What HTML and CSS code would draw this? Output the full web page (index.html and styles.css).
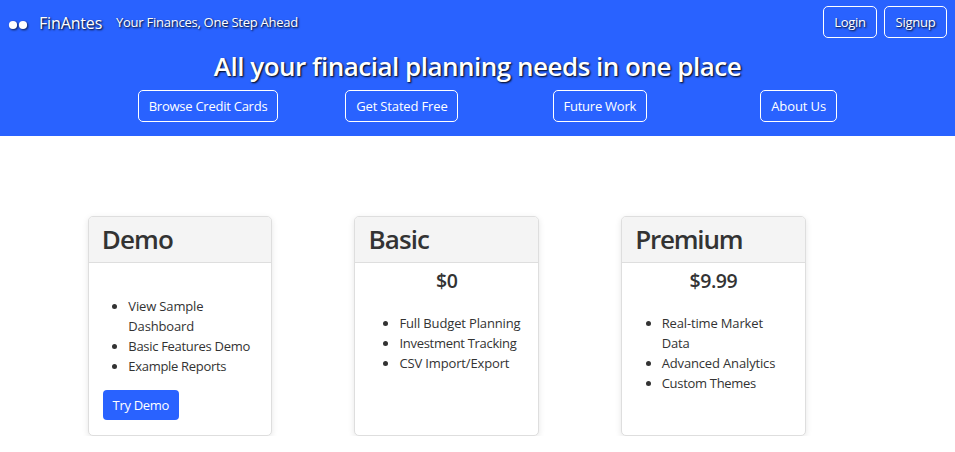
FILE: index.html
```html
<!DOCTYPE html>
<html lang="en">
<head>
<meta charset="utf-8">
<title>FinAntes</title>
<link rel="stylesheet" href="styles.css">
</head>
<body>
<header class="header">
  <nav class="nav">
    <svg class="logo" width="20" height="10" viewBox="0 0 20 10"><circle cx="5" cy="5" r="4.1" fill="#fff"/><circle cx="15" cy="5" r="4.1" fill="#fff"/></svg>
    <span class="brand">FinAntes</span>
    <span class="tagline">Your Finances, One Step Ahead</span>
    <div class="account">
      <a class="btn login">Login</a>
      <a class="btn signup">Signup</a>
    </div>
  </nav>
  <h1 class="headline">All your finacial planning needs in one place</h1>
  <div class="links">
    <div><a class="btn browse">Browse Credit Cards</a></div>
    <div><a class="btn started">Get Stated Free</a></div>
    <div><a class="btn future">Future Work</a></div>
    <div><a class="btn about">About Us</a></div>
  </div>
</header>
<main class="plans">
  <section class="card">
    <h2 class="card-title">Demo</h2>
    <div class="card-body first">
      <ul class="features">
        <li>View Sample<br>Dashboard</li>
        <li class="tight">Basic Features Demo</li>
        <li class="tight">Example Reports</li>
      </ul>
      <a class="try">Try Demo</a>
    </div>
  </section>
  <section class="card">
    <h2 class="card-title">Basic</h2>
    <div class="card-body">
      <h3 class="price">$0</h3>
      <ul class="features basic">
        <li>Full Budget Planning</li>
        <li class="tight">Investment Tracking</li>
        <li>CSV Import/Export</li>
      </ul>
    </div>
  </section>
  <section class="card">
    <h2 class="card-title premium">Premium</h2>
    <div class="card-body">
      <h3 class="price">$9.99</h3>
      <ul class="features">
        <li>Real-time Market<br>Data</li>
        <li>Advanced Analytics</li>
        <li class="tight">Custom Themes</li>
      </ul>
    </div>
  </section>
</main>
</body>
</html>
```
FILE: styles.css
```css
* { box-sizing: border-box; }
body {
  margin: 0;
  background: #fff;
  color: #333;
  font: 13px/20px "Open Sans", "Noto Sans", sans-serif;
  overflow: hidden;
}
.header {
  height: 136px;
  background: #2962ff;
  color: #fff;
}
.nav {
  display: flex;
  align-items: center;
  height: 44px;
  padding: 0 8px;
  text-shadow: 1px 1px 2px #000;
}
.logo {
  margin: 5px 11px 0 0;
  filter: drop-shadow(1px 1px 1px rgba(0, 0, 0, .7));
}
.brand {
  width: 77px;
  padding-top: 1px;
  font-size: 16px;
  letter-spacing: -0.15px;
  white-space: nowrap;
}
.tagline { letter-spacing: -0.25px; white-space: nowrap; }
.account { display: flex; gap: 7px; margin-left: auto; }
.btn {
  display: block;
  height: 32px;
  border: 1px solid #fff;
  border-radius: 5px;
  line-height: 31px;
  text-align: center;
  letter-spacing: -0.25px;
  white-space: nowrap;
}
.login { width: 54px; }
.signup { width: 63px; }
.headline {
  margin: 6px 0 8px;
  font-size: 26px;
  line-height: 32px;
  font-weight: 600;
  letter-spacing: -0.5px;
  text-align: center;
  text-shadow: 1px 1px 2px #000;
  white-space: nowrap;
}
.links {
  display: grid;
  grid-template-columns: repeat(4, 207.4px);
  padding-left: 138px;
}
.browse { width: 140px; }
.started { width: 113px; letter-spacing: -0.15px; }
.future { width: 94px; }
.about { width: 77px; letter-spacing: -0.1px; }
.plans {
  display: flex;
  gap: 82.3px;
  padding: 80px 0 0 87.8px;
}
.card {
  width: 184.4px;
  height: 220px;
  border: 1px solid #dedede;
  border-radius: 5px;
  background: #fff;
  box-shadow: 0 2px 6px rgba(0, 0, 0, .1);
}
.card-title {
  height: 46px;
  margin: 0;
  padding-left: 13px;
  border-bottom: 1px solid #dedede;
  border-radius: 4px 4px 0 0;
  background: #f4f4f4;
  font-size: 26px;
  line-height: 45px;
  font-weight: 600;
  letter-spacing: -0.9px;
}
.premium { letter-spacing: -1.2px; }
.card-body { padding: 5px 14px; }
.first { padding-top: 33px; }
.price {
  margin: 0 0 19px;
  font-size: 19.5px;
  line-height: 26px;
  font-weight: 600;
  letter-spacing: -0.4px;
  text-align: center;
}
.features {
  margin: 0 0 14px;
  padding-left: 25.5px;
  letter-spacing: -0.15px;
  white-space: nowrap;
}
.tight { letter-spacing: -0.3px; }
.basic { padding-left: 30px; }
.try {
  display: block;
  width: 76px;
  height: 30px;
  border-radius: 4px;
  background: #2962ff;
  color: #fff;
  line-height: 31px;
  letter-spacing: -0.3px;
  text-align: center;
}
```
